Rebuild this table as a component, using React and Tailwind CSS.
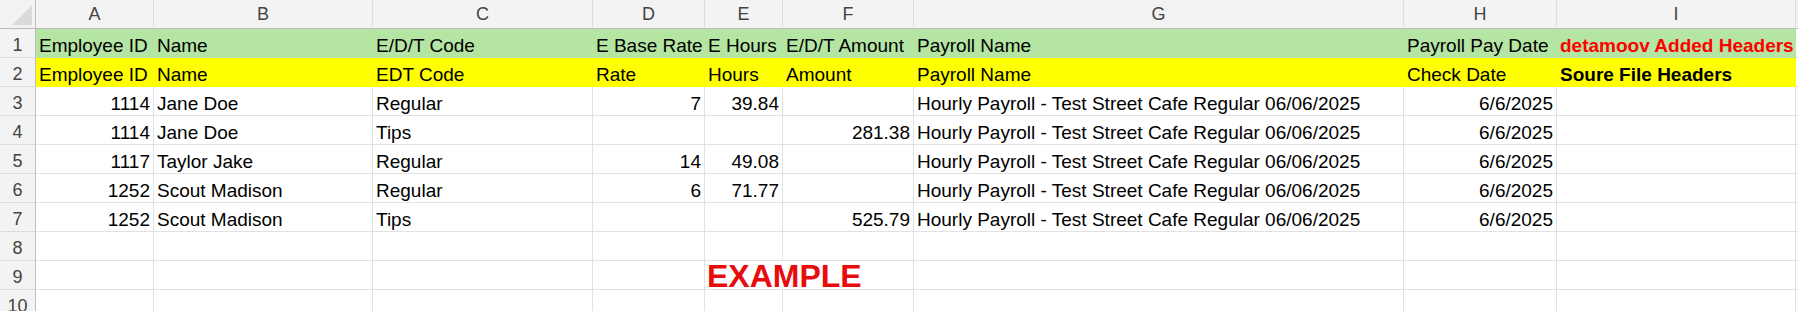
import React from 'react';
import clsx from 'clsx';

const letters = ['A', 'B', 'C', 'D', 'E', 'F', 'G', 'H', 'I'];

const payroll = 'Hourly Payroll - Test Street Cafe Regular 06/06/2025';

// r = right aligned (numbers), l = text
const rows = [
  {
    fill: 'green',
    cells: ['Employee ID', 'Name', 'E/D/T Code', 'E Base Rate', 'E Hours', 'E/D/T Amount', 'Payroll Name', 'Payroll Pay Date', 'detamoov Added Headers'],
  },
  {
    fill: 'yellow',
    cells: ['Employee ID', 'Name', 'EDT Code', 'Rate', 'Hours', 'Amount', 'Payroll Name', 'Check Date', 'Soure File Headers'],
  },
  { cells: ['1114', 'Jane Doe', 'Regular', '7', '39.84', '', payroll, '6/6/2025', ''] },
  { cells: ['1114', 'Jane Doe', 'Tips', '', '', '281.38', payroll, '6/6/2025', ''] },
  { cells: ['1117', 'Taylor Jake', 'Regular', '14', '49.08', '', payroll, '6/6/2025', ''] },
  { cells: ['1252', 'Scout Madison', 'Regular', '6', '71.77', '', payroll, '6/6/2025', ''] },
  { cells: ['1252', 'Scout Madison', 'Tips', '', '', '525.79', payroll, '6/6/2025', ''] },
  { cells: ['', '', '', '', '', '', '', '', ''] },
  { cells: ['', '', '', '', '', '', '', '', ''], example: true },
  { cells: ['', '', '', '', '', '', '', '', ''] },
];

// columns holding numbers / dates in the data rows
const rightCols = [0, 3, 4, 5, 7];

const Cell = ({ value, fill, right, bold, red }) => (
  <div
    className={clsx(
      'flex items-end h-[29px] border-r border-b pb-[2px] px-[3px] whitespace-nowrap leading-[19px] text-black',
      fill === 'green' && 'bg-[#b4e5a2] border-transparent',
      fill === 'yellow' && 'bg-[#ffff00] border-transparent',
      !fill && 'bg-white border-[#e1e1e1]',
      right && 'justify-end'
    )}
  >
    <span className={clsx(bold && 'font-bold', red && 'text-[#ff0000]')}>{value}</span>
  </div>
);

export default function App() {
  return (
    <div className="w-[1798px] h-[311px] overflow-hidden bg-white font-['Liberation_Sans',Arial,sans-serif] text-[19px]">
      <div className="grid grid-cols-[36px_118px_219px_220px_112px_78px_131px_490px_153px_239px_1fr]">
        {/* column header row */}
        <div className="relative h-[29px] bg-[#f3f3f3] border-r border-b border-[#bdbdbd]">
          <div className="absolute left-[12px] top-[5px] w-0 h-0 border-l-[20px] border-l-transparent border-b-[20px] border-b-[#dadada]" />
        </div>
        {letters.map((l) => (
          <div
            key={l}
            className="flex items-center justify-center h-[29px] bg-[#f3f3f3] border-r border-r-[#dcdcdc] border-b border-b-[#bdbdbd] text-[18px] text-[#444] pt-[1px]"
          >
            {l}
          </div>
        ))}
        <div className="h-[29px] bg-[#f3f3f3] border-b border-[#bdbdbd]" />

        {rows.map((row, i) => (
          <React.Fragment key={i}>
            <div className="flex items-end justify-center h-[29px] pb-[2px] bg-[#f3f3f3] border-r border-r-[#bdbdbd] border-b border-b-[#dcdcdc] leading-[19px] text-[18px] text-[#444]">
              {i + 1}
            </div>
            {row.cells.map((v, j) =>
              row.example && j === 4 ? (
                <div
                  key={j}
                  className="flex items-end h-[29px] border-r border-b border-r-transparent border-b-[#e1e1e1] pl-[2px] pb-[2px] whitespace-nowrap"
                >
                  <span className="relative z-10 -mb-[5px] text-[32px] leading-[32px] font-bold text-[#e80c0c]">EXAMPLE</span>
                </div>
              ) : (
                <Cell
                  key={j}
                  value={v}
                  fill={row.fill}
                  right={!row.fill && rightCols.includes(j)}
                  bold={j === 8 && !!row.fill}
                  red={j === 8 && row.fill === 'green'}
                />
              )
            )}
            <div className="h-[29px] bg-white border-b border-[#e1e1e1]" />
          </React.Fragment>
        ))}
      </div>
    </div>
  );
}
